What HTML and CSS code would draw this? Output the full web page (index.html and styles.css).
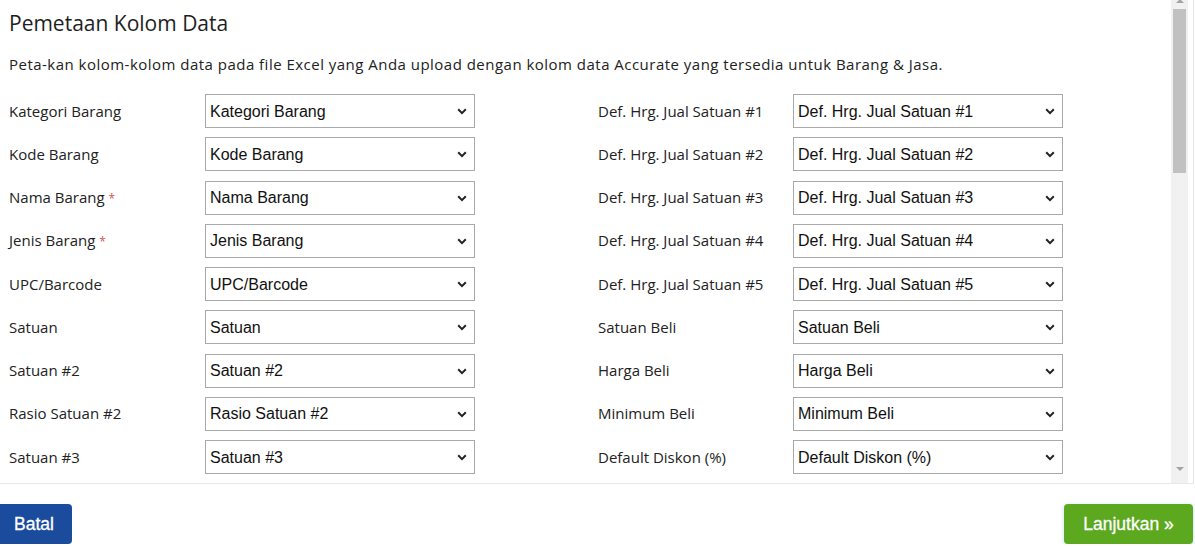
FILE: index.html
```html
<!DOCTYPE html>
<html lang="id">
<head>
<meta charset="utf-8">
<title>Pemetaan Kolom Data</title>
<link rel="stylesheet" href="styles.css">
</head>
<body>
<div class="panel">
  <div class="content">
    <h1 class="title">Pemetaan Kolom Data</h1>
    <p class="desc">Peta-kan kolom-kolom data pada file Excel yang Anda upload dengan kolom data Accurate yang tersedia untuk Barang &amp; Jasa.</p>
    <div class="columns">
      <div class="col col-left">
        <label class="lbl">Kategori Barang</label>
        <div class="sel-wrap"><select class="sel"><option>Kategori Barang</option></select><svg class="chev" width="10" height="7" viewBox="0 0 10 7"><path d="M1.2 1.3 5 5.1 8.8 1.3" fill="none" stroke="#222" stroke-width="2"/></svg></div>
        <label class="lbl">Kode Barang</label>
        <div class="sel-wrap"><select class="sel"><option>Kode Barang</option></select><svg class="chev" width="10" height="7" viewBox="0 0 10 7"><path d="M1.2 1.3 5 5.1 8.8 1.3" fill="none" stroke="#222" stroke-width="2"/></svg></div>
        <label class="lbl">Nama Barang <span class="req">*</span></label>
        <div class="sel-wrap"><select class="sel"><option>Nama Barang</option></select><svg class="chev" width="10" height="7" viewBox="0 0 10 7"><path d="M1.2 1.3 5 5.1 8.8 1.3" fill="none" stroke="#222" stroke-width="2"/></svg></div>
        <label class="lbl">Jenis Barang <span class="req">*</span></label>
        <div class="sel-wrap"><select class="sel"><option>Jenis Barang</option></select><svg class="chev" width="10" height="7" viewBox="0 0 10 7"><path d="M1.2 1.3 5 5.1 8.8 1.3" fill="none" stroke="#222" stroke-width="2"/></svg></div>
        <label class="lbl">UPC/Barcode</label>
        <div class="sel-wrap"><select class="sel"><option>UPC/Barcode</option></select><svg class="chev" width="10" height="7" viewBox="0 0 10 7"><path d="M1.2 1.3 5 5.1 8.8 1.3" fill="none" stroke="#222" stroke-width="2"/></svg></div>
        <label class="lbl">Satuan</label>
        <div class="sel-wrap"><select class="sel"><option>Satuan</option></select><svg class="chev" width="10" height="7" viewBox="0 0 10 7"><path d="M1.2 1.3 5 5.1 8.8 1.3" fill="none" stroke="#222" stroke-width="2"/></svg></div>
        <label class="lbl">Satuan #2</label>
        <div class="sel-wrap"><select class="sel"><option>Satuan #2</option></select><svg class="chev" width="10" height="7" viewBox="0 0 10 7"><path d="M1.2 1.3 5 5.1 8.8 1.3" fill="none" stroke="#222" stroke-width="2"/></svg></div>
        <label class="lbl">Rasio Satuan #2</label>
        <div class="sel-wrap"><select class="sel"><option>Rasio Satuan #2</option></select><svg class="chev" width="10" height="7" viewBox="0 0 10 7"><path d="M1.2 1.3 5 5.1 8.8 1.3" fill="none" stroke="#222" stroke-width="2"/></svg></div>
        <label class="lbl">Satuan #3</label>
        <div class="sel-wrap"><select class="sel"><option>Satuan #3</option></select><svg class="chev" width="10" height="7" viewBox="0 0 10 7"><path d="M1.2 1.3 5 5.1 8.8 1.3" fill="none" stroke="#222" stroke-width="2"/></svg></div>
      </div>
      <div class="col col-right">
        <label class="lbl">Def. Hrg. Jual Satuan #1</label>
        <div class="sel-wrap"><select class="sel"><option>Def. Hrg. Jual Satuan #1</option></select><svg class="chev" width="10" height="7" viewBox="0 0 10 7"><path d="M1.2 1.3 5 5.1 8.8 1.3" fill="none" stroke="#222" stroke-width="2"/></svg></div>
        <label class="lbl">Def. Hrg. Jual Satuan #2</label>
        <div class="sel-wrap"><select class="sel"><option>Def. Hrg. Jual Satuan #2</option></select><svg class="chev" width="10" height="7" viewBox="0 0 10 7"><path d="M1.2 1.3 5 5.1 8.8 1.3" fill="none" stroke="#222" stroke-width="2"/></svg></div>
        <label class="lbl">Def. Hrg. Jual Satuan #3</label>
        <div class="sel-wrap"><select class="sel"><option>Def. Hrg. Jual Satuan #3</option></select><svg class="chev" width="10" height="7" viewBox="0 0 10 7"><path d="M1.2 1.3 5 5.1 8.8 1.3" fill="none" stroke="#222" stroke-width="2"/></svg></div>
        <label class="lbl">Def. Hrg. Jual Satuan #4</label>
        <div class="sel-wrap"><select class="sel"><option>Def. Hrg. Jual Satuan #4</option></select><svg class="chev" width="10" height="7" viewBox="0 0 10 7"><path d="M1.2 1.3 5 5.1 8.8 1.3" fill="none" stroke="#222" stroke-width="2"/></svg></div>
        <label class="lbl">Def. Hrg. Jual Satuan #5</label>
        <div class="sel-wrap"><select class="sel"><option>Def. Hrg. Jual Satuan #5</option></select><svg class="chev" width="10" height="7" viewBox="0 0 10 7"><path d="M1.2 1.3 5 5.1 8.8 1.3" fill="none" stroke="#222" stroke-width="2"/></svg></div>
        <label class="lbl">Satuan Beli</label>
        <div class="sel-wrap"><select class="sel"><option>Satuan Beli</option></select><svg class="chev" width="10" height="7" viewBox="0 0 10 7"><path d="M1.2 1.3 5 5.1 8.8 1.3" fill="none" stroke="#222" stroke-width="2"/></svg></div>
        <label class="lbl">Harga Beli</label>
        <div class="sel-wrap"><select class="sel"><option>Harga Beli</option></select><svg class="chev" width="10" height="7" viewBox="0 0 10 7"><path d="M1.2 1.3 5 5.1 8.8 1.3" fill="none" stroke="#222" stroke-width="2"/></svg></div>
        <label class="lbl">Minimum Beli</label>
        <div class="sel-wrap"><select class="sel"><option>Minimum Beli</option></select><svg class="chev" width="10" height="7" viewBox="0 0 10 7"><path d="M1.2 1.3 5 5.1 8.8 1.3" fill="none" stroke="#222" stroke-width="2"/></svg></div>
        <label class="lbl">Default Diskon (%)</label>
        <div class="sel-wrap"><select class="sel"><option>Default Diskon (%)</option></select><svg class="chev" width="10" height="7" viewBox="0 0 10 7"><path d="M1.2 1.3 5 5.1 8.8 1.3" fill="none" stroke="#222" stroke-width="2"/></svg></div>
      </div>
    </div>
  </div>
  <div class="vscroll">
    <span class="arrow-up"></span>
    <span class="thumb"></span>
    <span class="track-fill"></span>
    <span class="arrow-down"></span>
  </div>
</div>
<div class="footer">
  <button class="btn btn-cancel">Batal</button>
  <button class="btn btn-next">Lanjutkan »</button>
</div>
</body>
</html>
```
FILE: styles.css
```css
html, body {
  margin: 0;
  padding: 0;
  background: #fff;
}
body {
  font-family: "Open Sans", "Noto Sans", sans-serif;
  color: #222;
  overflow: hidden;
}
.panel {
  display: flex;
  height: 484px;
  width: 1194px;
  box-sizing: border-box;
  border-right: 1px solid #e4e4e4;
  border-bottom: 1px solid #e8e8e8;
  padding-right: 5px;
}
.content {
  flex: 1;
  overflow: hidden;
  padding-left: 9px;
}
.vscroll {
  width: 17px;
  flex: none;
  background: #f1f1f1;
  display: flex;
  flex-direction: column;
  align-items: center;
}
.arrow-up {
  width: 0;
  height: 0;
  border-left: 4px solid transparent;
  border-right: 4px solid transparent;
  border-bottom: 4px solid #a3a3a3;
  margin-top: -1px;
}
.thumb {
  width: 13px;
  height: 164px;
  margin-top: 6px;
  background: #c1c1c1;
}
.track-fill {
  flex: 1;
}
.arrow-down {
  width: 0;
  height: 0;
  border-left: 4px solid transparent;
  border-right: 4px solid transparent;
  border-top: 4px solid #a3a3a3;
  margin-bottom: 12px;
}
.title {
  font-size: 21px;
  font-weight: 400;
  line-height: 28px;
  margin: 9px 0 0;
  color: #1e1e1e;
}
.desc {
  font-size: 15px;
  letter-spacing: 0.48px;
  line-height: 20px;
  margin: 17px 0 0;
  color: #222;
}
.columns {
  display: flex;
  align-items: flex-start;
  gap: 123px;
  margin-top: 20px;
}
.col {
  display: grid;
  row-gap: 9.25px;
  align-items: center;
}
.col-left {
  grid-template-columns: 196px 270px;
}
.col-right {
  grid-template-columns: 195px 270px;
}
.lbl {
  font-size: 15px;
  color: #222;
  padding-bottom: 1px;
}
.req {
  color: #d9534f;
  font-size: 12px;
}
.sel-wrap {
  position: relative;
  height: 34px;
}
.sel {
  appearance: none;
  -webkit-appearance: none;
  width: 100%;
  height: 34px;
  box-sizing: border-box;
  border: 1px solid #a9a9a9;
  border-radius: 0;
  background: #fff;
  padding: 0 20px 0 4px;
  font-family: "Liberation Sans", Arial, sans-serif;
  font-size: 16px;
  color: #111;
}
.chev {
  position: absolute;
  right: 8px;
  top: 14px;
  pointer-events: none;
}
.footer {
  display: flex;
  justify-content: space-between;
  margin-top: 20px;
}
.btn {
  height: 40px;
  border: 0;
  color: #fff;
  font-family: "Liberation Sans", Arial, sans-serif;
  font-size: 17.5px;
  border-radius: 4px;
  -webkit-text-stroke: 0.3px #fff;
}
.btn-cancel {
  background: #1b4b9d;
  width: 76px;
  margin-left: -4px;
  padding: 0;
}
.btn-next {
  background: #5ca81f;
  width: 129px;
  margin-right: 2px;
  box-shadow: 0 1px 4px rgba(80, 160, 220, 0.35);
}
```
